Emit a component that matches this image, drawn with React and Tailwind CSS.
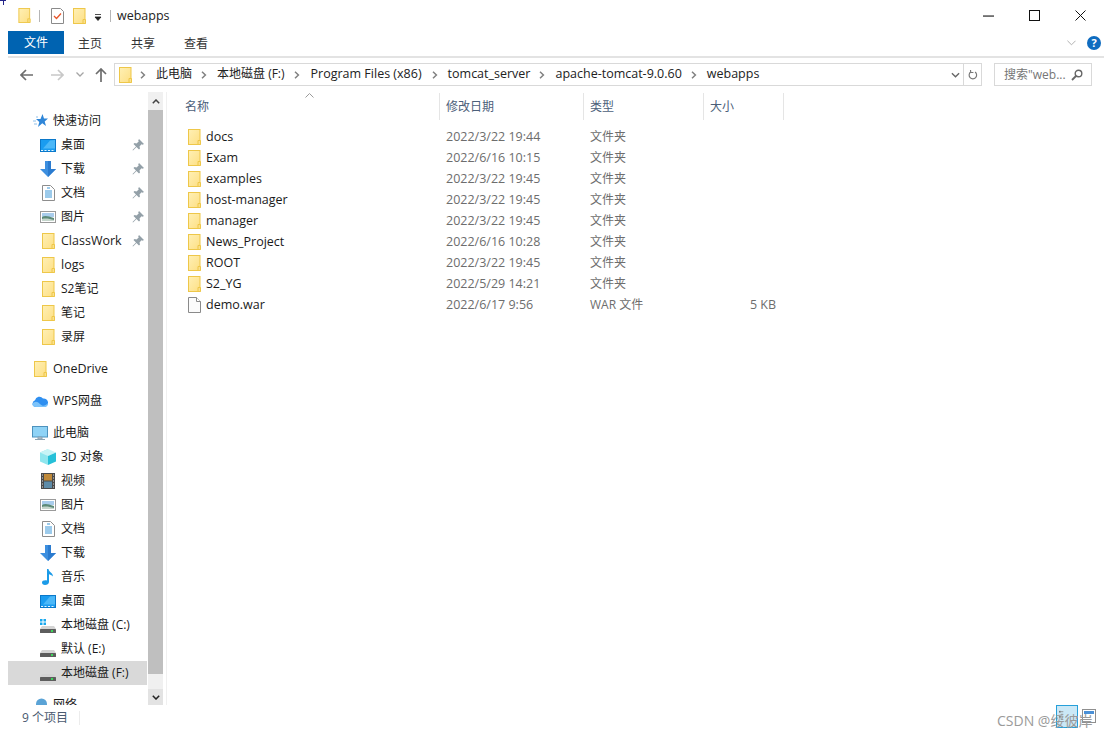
const FONT = "font-['Open_Sans','Noto_Sans_CJK_SC',sans-serif]";

function Folder({ className = 'w-[13px] h-4' }) {
  return (
    <svg viewBox="0 0 13 16" className={`shrink-0 ${className}`}>
      <defs>
        <linearGradient id="fld" x1="0" y1="0" x2="1" y2="1">
          <stop offset="0" stopColor="#fff0b5" />
          <stop offset="1" stopColor="#fddf84" />
        </linearGradient>
      </defs>
      <rect x="0.5" y="0.5" width="11.5" height="15" fill="url(#fld)" stroke="#eec749" />
      <path d="M10 15.5v-4h2.5v4z" fill="#fbe08c" stroke="#eec749" />
    </svg>
  );
}

function FileIcon() {
  return (
    <svg viewBox="0 0 13 16" className="w-[13px] h-4 shrink-0">
      <path d="M.5.5h8l4 4v11H.5z" fill="#fbfbfb" stroke="#8a8a8a" />
      <path d="M8.5.5v4h4" fill="#fff" stroke="#8a8a8a" />
    </svg>
  );
}

function Desktop() {
  return (
    <svg viewBox="0 0 16 13" className="w-4 h-[13px]">
      <rect x="0.5" y="0.5" width="15" height="12" fill="#1a9cf0" stroke="#0b78c9" />
      <path d="M10 1.5 15 1v8.5H3z" fill="#4cb8f8" />
      <path d="M1 11.5h14" stroke="#e8f6ff" strokeDasharray="2 1.5" />
    </svg>
  );
}

function Download() {
  return (
    <svg viewBox="0 0 16 16" className="w-4 h-4">
      <path d="M5 0h6v8h5l-8 8-8-8h5z" fill="#3d8fdf" />
      <path d="M8 0h3v8h5l-8 8z" fill="#2b7bcf" />
    </svg>
  );
}

function Doc() {
  return (
    <svg viewBox="0 0 13 16" className="w-[13px] h-4">
      <path d="M.5.5h8l4 4v11H.5z" fill="#fff" stroke="#8d8d8d" />
      <path d="M5 3h3M3 6h7M3 8h7M3 10h7M3 12h7" stroke="#3b97d8" />
    </svg>
  );
}

function Pictures() {
  return (
    <svg viewBox="0 0 16 12" className="w-4 h-3">
      <rect x="0.5" y="0.5" width="15" height="11" fill="#fff" stroke="#9a9a9a" />
      <rect x="2" y="2" width="12" height="4" fill="#a9cdec" />
      <path d="M2 6c3-2 6-1 12 1v3H2z" fill="#5c8a78" />
      <path d="M2 8c4-1 8 0 12 1v1H2z" fill="#c4d5cb" />
    </svg>
  );
}

function Video() {
  return (
    <svg viewBox="0 0 14 16" className="w-[14px] h-4">
      <rect width="14" height="16" fill="#4a4a4a" />
      <rect x="3" y="1" width="8" height="6.5" fill="#c08a3a" />
      <rect x="3" y="8.5" width="8" height="6.5" fill="#5d8ba8" />
      <path d="M1 2h1M1 5h1M1 8h1M1 11h1M1 14h1M12 2h1M12 5h1M12 8h1M12 11h1M12 14h1" stroke="#ddd" />
    </svg>
  );
}

function Music() {
  return (
    <svg viewBox="0 0 12 16" className="w-3 h-4">
      <path d="M5 0h1.5c.3 3 4.500 3.500 4.500 7.500C9.500 6 8 5.500 7 5.200V13c0 2-2 3-4 3S0 15 0 13.500 2 11 5 11.500z" fill="#1b9be8" />
    </svg>
  );
}

function Cube() {
  return (
    <svg viewBox="0 0 16 16" className="w-4 h-4">
      <path d="M8 0 0 3.500v9L8 16z" fill="#8fe6ee" />
      <path d="M8 0l8 3.500L8 7 0 3.500z" fill="#c7f4f6" />
      <path d="M8 7l8-3.500v9L8 16z" fill="#25c0d8" />
    </svg>
  );
}

function Drive({ win }) {
  return (
    <svg viewBox="0 0 16 16" className="w-4 h-4">
      {win && <path d="M0 2h2.500v2.500H0zM3.500 2H6v2.500H3.500zM0 5.500h2.500V8H0zM3.500 5.500H6V8H3.500z" fill="#19a8ee" />}
      <path d="M2 9h12l2 3H0z" fill="#d4d4d4" />
      <rect y="12" width="16" height="4" rx="0.5" fill="#5d5d5d" />
      <rect x="11" y="13" width="2" height="2" fill="#3cd65a" />
    </svg>
  );
}

function Computer() {
  return (
    <svg viewBox="0 0 16 15" className="w-4 h-[15px]">
      <rect x="0.5" y="0.5" width="15" height="10.5" fill="#8fd3f6" stroke="#4d92bd" />
      <path d="M6 11h4v2H6zM3 13.500h10" fill="#b9c4cc" stroke="#8ba3b3" />
    </svg>
  );
}

function Cloud() {
  return (
    <svg viewBox="0 0 16 11" className="w-4 h-[11px]">
      <path d="M4 11a3.500 3.500 0 0 1-1-6.800A4.500 4.500 0 0 1 11 2.500 4 4 0 0 1 12.500 11z" fill="#2f8ff0" />
      <path d="M0 8c3-3 5-3 8 0s5 2 8-1c0 2-1 4-3.500 4H4C2 11 .5 10 0 8z" fill="#7cc3fa" />
    </svg>
  );
}

function Star() {
  return (
    <svg viewBox="0 0 15 14" className="w-[15px] h-[14px]">
      <path d="M9.500 0l1.500 4.500h4L11.700 7.500 13 12 9.300 9.300 5 13l1.300-5L3 5h4.500z" fill="#2f86d8" />
      <path d="M0 7h3M1 10h3M3 3h2" stroke="#8fc0ea" />
    </svg>
  );
}

function Globe() {
  return (
    <svg viewBox="0 0 16 15" className="w-4 h-[15px]">
      <circle cx="9.500" cy="6" r="5.500" fill="#5aa3d6" />
      <path d="M0 9h16v1.500H0z" fill="#4d92bd" />
    </svg>
  );
}

function Pin() {
  return (
    <svg viewBox="0 0 12 12" className="w-3 h-3">
      <path d="M7 0l5 5-1.500.8-1-.5L7.500 7.500 8 9.500 7 10.500 4.500 8 1 11.500.5 11 4 7.500 1.500 5 2.500 4l2 .5 2.200-2-.5-1z" fill="#93a0a8" />
    </svg>
  );
}

function Chevron() {
  return (
    <svg viewBox="0 0 6 8" className="w-[6px] h-2 shrink-0">
      <path d="M1 .8 4.400 4 1 7.200" fill="none" stroke="#808080" strokeWidth="1.500" />
    </svg>
  );
}

const sideRows = [
  { label: '快速访问', icon: <Star />, top: true },
  { label: '桌面', icon: <Desktop />, pin: true },
  { label: '下载', icon: <Download />, pin: true },
  { label: '文档', icon: <Doc />, pin: true },
  { label: '图片', icon: <Pictures />, pin: true },
  { label: 'ClassWork', icon: <Folder />, pin: true },
  { label: 'logs', icon: <Folder /> },
  { label: 'S2笔记', icon: <Folder /> },
  { label: '笔记', icon: <Folder /> },
  { label: '录屏', icon: <Folder /> },
  { label: 'OneDrive', icon: <Folder />, top: true, gap: true },
  { label: 'WPS网盘', icon: <Cloud />, top: true, gap: true },
  { label: '此电脑', icon: <Computer />, top: true, gap: true },
  { label: '3D 对象', icon: <Cube /> },
  { label: '视频', icon: <Video /> },
  { label: '图片', icon: <Pictures /> },
  { label: '文档', icon: <Doc /> },
  { label: '下载', icon: <Download /> },
  { label: '音乐', icon: <Music /> },
  { label: '桌面', icon: <Desktop /> },
  { label: '本地磁盘 (C:)', icon: <Drive win /> },
  { label: '默认 (E:)', icon: <Drive /> },
  { label: '本地磁盘 (F:)', icon: <Drive />, active: true },
  { label: '网络', icon: <Globe />, top: true, gap: true },
];

const files = [
  ['docs', '2022/3/22 19:44', '文件夹', ''],
  ['Exam', '2022/6/16 10:15', '文件夹', ''],
  ['examples', '2022/3/22 19:45', '文件夹', ''],
  ['host-manager', '2022/3/22 19:45', '文件夹', ''],
  ['manager', '2022/3/22 19:45', '文件夹', ''],
  ['News_Project', '2022/6/16 10:28', '文件夹', ''],
  ['ROOT', '2022/3/22 19:45', '文件夹', ''],
  ['S2_YG', '2022/5/29 14:21', '文件夹', ''],
  ['demo.war', '2022/6/17 9:56', 'WAR 文件', '5 KB'],
];

const crumbs = ['此电脑', '本地磁盘 (F:)', 'Program Files (x86)', 'tomcat_server', 'apache-tomcat-9.0.60', 'webapps'];

// plain latin labels run a bit wider than Open Sans at 12px
const isLatin = (s) => /^[\x20-\x7e]+$/.test(s);

function SideRow({ row }) {
  return (
    <div className={`flex items-center h-6 shrink-0 ${row.top ? 'pl-6 gap-[5px]' : 'pl-8 gap-[5px]'} ${row.gap ? 'mt-2' : ''} ${row.active ? 'bg-[#d9d9d9]' : ''}`}>
      <span className="w-4 flex justify-center shrink-0">{row.icon}</span>
      <span className={`flex-1 text-[#1a1a1a] whitespace-nowrap ${isLatin(row.label) ? 'text-[12.5px]' : ''}`}>{row.label}</span>
      {row.pin && <span className="mr-[3px]"><Pin /></span>}
    </div>
  );
}

function TitleBar() {
  return (
    <div className="flex items-center h-[31px] shrink-0 pl-[18px] relative">
      <Folder className="w-[13px] h-[15px]" />
      <span className="w-px h-3 bg-[#b5b5b5] ml-2" />
      <svg viewBox="0 0 13 16" className="w-[13px] h-4 ml-[11px]">
        <path d="M.5.500h9l3 3v12H.5z" fill="#fff" stroke="#8a8a8a" />
        <path d="M3 8l2.500 2.500L10 5.500" fill="none" stroke="#e8562a" strokeWidth="1.300" />
      </svg>
      <span className="ml-[9px]"><Folder /></span>
      <svg viewBox="0 0 8 7" className="w-2 h-[7px] ml-2 mt-[3px]">
        <path d="M1 .5h6M1 3h6L4 6.500z" fill="#222" stroke="#222" strokeWidth="0.800" />
      </svg>
      <span className="w-px h-3 bg-[#b5b5b5] ml-2" />
      <span className="ml-1.5 text-[#222] text-[12.5px]">webapps</span>
      <div className="ml-auto flex items-center mr-[26px] gap-[35px]">
        <svg viewBox="0 0 10 10" className="w-[11px] h-[11px]"><path d="M0 5.500h10" stroke="#111" /></svg>
        <svg viewBox="0 0 11 11" className="w-[11px] h-[11px]"><rect x="0.5" y="0.5" width="10" height="10" fill="none" stroke="#111" /></svg>
        <svg viewBox="0 0 11 11" className="w-[11px] h-[11px]"><path d="M.5.500l10 10M10.500.500l-10 10" stroke="#111" /></svg>
      </div>
    </div>
  );
}

function Ribbon() {
  return (
    <div className="flex items-start h-[27px] shrink-0 ml-2 mr-2 border-b-2 border-[#e3e3e3]">
      <div className="w-14 h-[23px] bg-[#0063b1] text-white flex items-center justify-center">文件</div>
      <span className="ml-3.5 leading-[25px] text-[#333]">主页</span>
      <span className="ml-[29px] leading-[25px] text-[#333]">共享</span>
      <span className="ml-[29px] leading-[25px] text-[#333]">查看</span>
      <div className="ml-auto flex items-center gap-[11px] mt-[5px] mr-[3px]">
        <svg viewBox="0 0 10 6" className="w-[9px] h-[6px]"><path d="M.5.500 5 5 9.500.500" fill="none" stroke="#a8a8a8" /></svg>
        <span className="w-[14px] h-[14px] rounded-full bg-[#0f6cc0] text-white font-bold text-[11px] leading-[14px] text-center">?</span>
      </div>
    </div>
  );
}

function AddressRow() {
  return (
    <div className="flex items-start h-[34px] shrink-0 pt-[5px]">
      <div className="flex items-center w-[114px] h-[23px] shrink-0">
        <svg viewBox="0 0 14 12" className="w-[14px] h-3 ml-5"><path d="M1 6h12M6 1 1 6l5 5" fill="none" stroke="#6d6d6d" strokeWidth="1.700" /></svg>
        <svg viewBox="0 0 14 12" className="w-[14px] h-3 ml-4"><path d="M13 6H1M8 1l5 5-5 5" fill="none" stroke="#c8c8c8" strokeWidth="1.700" /></svg>
        <svg viewBox="0 0 8 5" className="w-2 h-[5px] ml-3"><path d="M.5.500 4 4 7.500.500" fill="none" stroke="#a5a5a5" strokeWidth="1.300" /></svg>
        <svg viewBox="0 0 12 14" className="w-3 h-[14px] ml-[11px]"><path d="M6 14V1M1 6l5-5 5 5" fill="none" stroke="#6d6d6d" strokeWidth="1.700" /></svg>
      </div>
      <div className="flex items-center h-[23px] w-[868px] border border-[#d9d9d9] pl-1 shrink-0">
        <Folder className="w-[13px] h-4" />
        <span className="ml-2"><Chevron /></span>
        {crumbs.map((c, i) => (
          <div key={c} className="flex items-center">
            <span className={`ml-[10px] pb-0.5 text-[#222] whitespace-nowrap ${isLatin(c) ? 'text-[12.5px]' : ''} ${c.startsWith('Program') ? 'pl-px pr-px' : ''}`}>{c}</span>
            {i < crumbs.length - 1 && <span className="ml-[9px]"><Chevron /></span>}
          </div>
        ))}
        <div className="ml-auto flex items-center h-full">
          <svg viewBox="0 0 10 6" className="w-[9px] h-[6px] mr-[3px]"><path d="M1 1l4 4 4-4" fill="none" stroke="#666" strokeWidth="1.500" /></svg>
          <div className="w-[18px] h-full border-l border-[#d9d9d9] flex items-center justify-center">
            <svg viewBox="0 0 12 14" className="w-[10px] h-3"><path d="M3.200 3.500A4.500 4.500 0 1 0 8.500 3.500M3 1l.3 3H6.500" fill="none" stroke="#777" strokeWidth="1.400" /></svg>
          </div>
        </div>
      </div>
      <div className="flex items-center h-[23px] w-[98px] border border-[#d9d9d9] ml-3 pl-[9px] shrink-0">
        <span className="text-[#767676] whitespace-nowrap">搜索"web...</span>
        <svg viewBox="0 0 12 12" className="w-3 h-3 ml-auto mr-2"><circle cx="7.500" cy="4.500" r="3.300" fill="none" stroke="#666" strokeWidth="1.400" /><path d="M5 7l-4 4" stroke="#666" strokeWidth="1.800" /></svg>
      </div>
    </div>
  );
}

function Sidebar() {
  return (
    <div className="flex shrink-0 h-full">
      <div className="ml-2 w-[139px] mr-px pt-[17px] overflow-hidden flex flex-col">
        {sideRows.map((r, i) => <SideRow key={i} row={r} />)}
      </div>
      <div className="w-[15px] flex flex-col pt-px bg-[#f0f0f0]">
        <div className="h-[17px] flex items-center justify-center">
          <svg viewBox="0 0 8 5" className="w-2 h-[5px]"><path d="M.8 4.300 4 1l3.200 3.300" fill="none" stroke="#444" strokeWidth="1.500" /></svg>
        </div>
        <div className="h-[564px] bg-[#bfbfbf]" />
        <div className="flex-1" />
        <div className="h-4 bg-[#e3e3e3] flex items-center justify-center">
          <svg viewBox="0 0 8 5" className="w-2 h-[5px]"><path d="M.8.700 4 4l3.200-3.300" fill="none" stroke="#222" strokeWidth="1.500" /></svg>
        </div>
      </div>
      <div className="w-[3px]" />
    </div>
  );
}

function FileList() {
  const cols = 'grid grid-cols-[273px_144px_120px_80px]';
  return (
    <div className="flex-1 border-l border-[#f0f0f0] pt-px min-w-0">
      <div className={`${cols} h-[27px] text-[#4c607a] relative`}>
        <div className="border-r border-[#e5e5e5] pl-[18px] pt-1.5">名称</div>
        <div className="border-r border-[#e5e5e5] pl-1.5 pt-1.5">修改日期</div>
        <div className="border-r border-[#e5e5e5] pl-1.5 pt-1.5">类型</div>
        <div className="border-r border-[#e5e5e5] pl-1.5 pt-1.5">大小</div>
        <svg viewBox="0 0 9 5" className="absolute left-[138px] top-0 w-[9px] h-[5px]"><path d="M.5 4.500 4.500.5l4 4" fill="none" stroke="#9a9a9a" /></svg>
      </div>
      <div className="pt-1.5">
        {files.map(([name, date, type, size]) => (
          <div key={name} className={`${cols} h-[21px] items-center`}>
            <div className="flex items-center pl-[21px] gap-[5px] text-[#1a1a1a] text-[12.5px]">
              {size ? <FileIcon /> : <Folder />}
              <span>{name}</span>
            </div>
            <div className="pl-1.5 text-[#6d6d6d] text-[12.5px]">{date}</div>
            <div className="pl-1.5 text-[#6d6d6d]">{type}</div>
            <div className="pr-2 text-right text-[#6d6d6d] text-[12.5px]">{size}</div>
          </div>
        ))}
      </div>
    </div>
  );
}

function StatusBar() {
  return (
    <div className="flex-1 relative flex items-start pl-[22px] pt-[5px] text-[#4a5a70]">
      <span>9 个项目</span>
      <span className="w-px h-3.5 bg-[#ececec] ml-[11px] mt-px" />
      <div className="absolute left-[1056px] top-0 w-[22px] h-[23px] border border-[#26a0da] bg-[#cbe8f6]" />
      <svg viewBox="0 0 14 12" className="absolute left-[1059px] top-[5px] w-3 h-3">
        <path d="M2 1h3M2 4h3M2 7h3M2 10h3" stroke="#8a8a8a" />
        <rect x="0" y="0" width="2" height="2" fill="#777" />
        <rect x="0" y="6" width="2" height="2" fill="#777" />
      </svg>
      <svg viewBox="0 0 14 14" className="absolute left-[1082px] top-[4px] w-[14px] h-[14px]">
        <rect x="0.5" y="0.5" width="13" height="13" fill="none" stroke="#8f8f8f" />
        <rect x="2" y="2" width="10" height="3" fill="#4a90d6" />
      </svg>
      <span className="absolute left-[997px] top-2 text-[14px] text-[#9a9a9a] whitespace-nowrap">CSDN @绥彼岸</span>
    </div>
  );
}

export default function App() {
  return (
    <div className={`${FONT} text-[12px] leading-4 bg-white w-[1112px] h-[737px] overflow-hidden flex flex-col relative`}>
      <span className="absolute left-0 top-0 w-[6px] h-[5px] border-t border-[#24248a]">
        <span className="block w-px h-1 bg-[#24248a] ml-[3px]" />
      </span>
      <TitleBar />
      <Ribbon />
      <AddressRow />
      <div className="flex h-[613px] shrink-0">
        <Sidebar />
        <FileList />
      </div>
      <StatusBar />
    </div>
  );
}
